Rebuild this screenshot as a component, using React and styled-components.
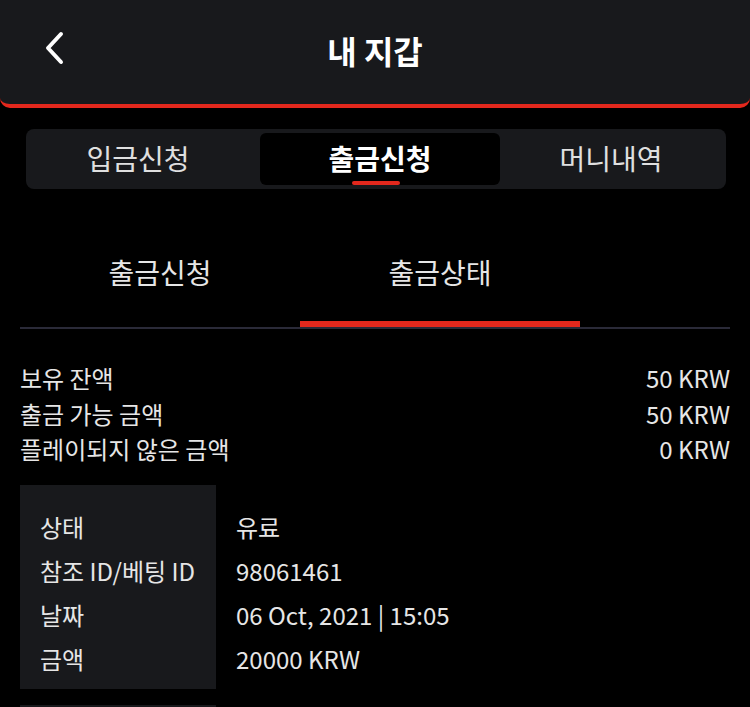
import React from "react";
import styled, { createGlobalStyle } from "styled-components";

const GlobalStyle = createGlobalStyle`
    body {
        margin: 0;
        background: #000;
        color: #e6e6e6;
        font-family: "Noto Sans CJK KR", "Noto Sans", sans-serif;
    }
`;

const Page = styled.div`
    width: 750px;
    height: 707px;
    background: #000;
    overflow: hidden;
`;

const Header = styled.header`
    display: grid;
    grid-template-columns: 1fr auto 1fr;
    align-items: center;
    height: 104px;
    background: #18191c;
    border-bottom: 4px solid #e3281d;
    border-radius: 0 0 10px 10px;
`;

const BackButton = styled.button`
    justify-self: start;
    display: flex;
    align-items: center;
    padding: 0 0 8px 42px;
    background: none;
    border: 0;
    cursor: pointer;
`;

const Title = styled.h1`
    margin: 0 0 4px;
    font-size: 32px;
    font-weight: 700;
    color: #fff;
`;

const TabBar = styled.nav`
    display: grid;
    grid-template-columns: 230px 240px 1fr;
    height: 60px;
    margin: 21px 24px 0 26px;
    padding: 4px;
    box-sizing: border-box;
    background: #18191c;
    border-radius: 8px;
`;

const Tab = styled.div`
    position: relative;
    display: flex;
    align-items: center;
    justify-content: center;
    padding-bottom: 2px;
    font-size: 28px;
    font-weight: ${p => (p.$active ? 700 : 400)};
    color: ${p => (p.$active ? "#fff" : "#e0e0e0")};
    background: ${p => (p.$active ? "#000" : "transparent")};
    border-radius: 6px;

    &:first-child {
        padding-right: 14px;
    }
`;

const TabMark = styled.span`
    position: absolute;
    left: 92px;
    bottom: 0;
    width: 48px;
    height: 4px;
    border-radius: 2px;
    background: #e3281d;
`;

const SubTabs = styled.div`
    display: flex;
    margin: 40px 20px 0;
    border-bottom: 2px solid #2a2a38;
`;

const SubTab = styled.div`
    display: flex;
    align-items: center;
    justify-content: center;
    width: 280px;
    height: 98px;
    padding-bottom: 6px;
    box-sizing: border-box;
    font-size: 28px;
    color: #e6e6e6;
    border-bottom: 6px solid ${p => (p.$active ? "#e3281d" : "transparent")};
`;

const Balance = styled.section`
    padding: 31px 20px 0;
`;

const BalanceRow = styled.div`
    display: flex;
    justify-content: space-between;
    line-height: 35.5px;
    font-size: 24px;
`;

const Record = styled.div`
    display: flex;
    margin: ${p => (p.$first ? "18px" : "16px")} 20px 0;
`;

const LabelCol = styled.div`
    width: 196px;
    padding: 20px 0 8px 20px;
    box-sizing: border-box;
    background: #18191c;
`;

const ValueCol = styled.div`
    padding: 20px 0 8px 20px;
`;

const Cell = styled.div`
    height: 44.2px;
    line-height: 44.2px;
    font-size: 24px;
    color: #e6e6e6;
    white-space: nowrap;
`;

const ChevronLeft = () => (
    <svg width="24" height="34" viewBox="0 0 24 34" fill="none">
        <path d="M19 3 L6 17 L19 31" stroke="#fff" strokeWidth="4" strokeLinecap="round" strokeLinejoin="round" />
    </svg>
);

const balances = [
    ["보유 잔액", "50 KRW"],
    ["출금 가능 금액", "50 KRW"],
    ["플레이되지 않은 금액", "0 KRW"],
];

const record = [
    ["상태", "유료"],
    ["참조 ID/베팅 ID", "98061461"],
    ["날짜", "06 Oct, 2021 | 15:05"],
    ["금액", "20000 KRW"],
];

const RecordBlock = ({ first }) => (
    <Record $first={first}>
        <LabelCol>
            {record.map(([label]) => (
                <Cell key={label}>{label}</Cell>
            ))}
        </LabelCol>
        <ValueCol>
            {record.map(([label, value]) => (
                <Cell key={label}>{value}</Cell>
            ))}
        </ValueCol>
    </Record>
);

export default function App() {
    return (
        <Page>
            <GlobalStyle />
            <Header>
                <BackButton aria-label="back">
                    <ChevronLeft />
                </BackButton>
                <Title>내 지갑</Title>
                <span />
            </Header>

            <TabBar>
                <Tab>입금신청</Tab>
                <Tab $active>
                    출금신청
                    <TabMark />
                </Tab>
                <Tab>머니내역</Tab>
            </TabBar>

            <SubTabs>
                <SubTab>출금신청</SubTab>
                <SubTab $active>출금상태</SubTab>
            </SubTabs>

            <Balance>
                {balances.map(([label, value]) => (
                    <BalanceRow key={label}>
                        <span>{label}</span>
                        <span>{value}</span>
                    </BalanceRow>
                ))}
            </Balance>

            <RecordBlock first />
            <RecordBlock />
        </Page>
    );
}
